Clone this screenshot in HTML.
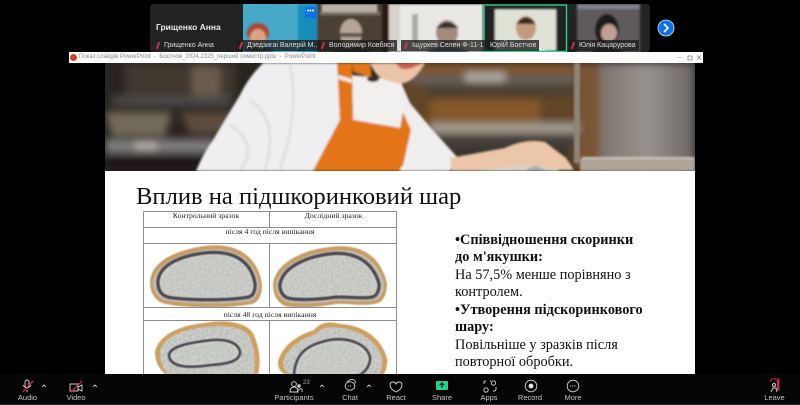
<!DOCTYPE html>
<html><head><meta charset="utf-8">
<style>
html,body{margin:0;padding:0;background:#000;}
body{width:800px;height:405px;position:relative;overflow:hidden;font-family:"Liberation Sans",sans-serif;}
.a{position:absolute;}
.name{position:absolute;height:11px;line-height:11px;font-size:7px;color:#ddd;background:rgba(30,30,30,.8);padding:0 3px 0 11px;white-space:nowrap;top:39.500px;filter:blur(.35px);}
.name:before{content:"";position:absolute;left:4px;top:2px;width:2px;height:7px;background:#d0304a;transform:rotate(20deg);}
.lab{position:absolute;top:393px;font-size:7.5px;line-height:10px;color:#c4c4c4;transform:translateX(-50%);white-space:nowrap;filter:blur(.2px);}
.t{position:absolute;font-family:"Liberation Serif",serif;color:#111;white-space:nowrap;filter:blur(.25px);}
.b{position:absolute;left:455px;font-family:"Liberation Serif",serif;font-size:14.300px;line-height:17px;color:#111;white-space:nowrap;filter:blur(.2px);}
</style></head><body>

<!-- gallery -->
<div class="a" style="left:150px;top:4px;width:500px;height:48px;background:#232326;border-radius:4px;"></div>
<svg class="a" style="left:150px;top:4px" width="500" height="48" viewBox="150 4 500 48">
<defs><filter id="f1"><feGaussianBlur stdDeviation="1"/></filter></defs>
<rect x="243" y="4" width="74" height="48" fill="#46a9c8"/>
<g filter="url(#f1)">
<rect x="298" y="4" width="19" height="48" fill="#188cb8"/>
<ellipse cx="258" cy="33" rx="11" ry="10" fill="#a94a35"/>
<ellipse cx="258" cy="38" rx="8" ry="9" fill="#d9a486"/>
<path d="M243 52 Q258 40 274 52Z" fill="#333"/>
<rect x="317" y="4" width="82" height="48" fill="#4b4136"/>
<rect x="322" y="4" width="55" height="8" fill="#b8b2a6"/>
<rect x="320" y="12" width="60" height="3" fill="#7d7568"/>
<rect x="382" y="4" width="7" height="48" fill="#2a1a10"/>
<rect x="389" y="4" width="11" height="48" fill="#d8d4cc"/>
<ellipse cx="351" cy="33" rx="11" ry="14" fill="#b7a49a"/>
<rect x="340" y="33" width="22" height="4" fill="#555"/>
<path d="M330 52 Q351 40 373 52Z" fill="#222"/>
<rect x="400" y="4" width="83" height="48" fill="#e9e8e4"/>
<rect x="412" y="14" width="6" height="30" fill="#aaa"/>
<ellipse cx="447" cy="33" rx="11" ry="13" fill="#a38a7a"/>
<path d="M436 28 Q447 16 459 28Z" fill="#333"/>
<path d="M425 52 Q447 40 470 52Z" fill="#5a6a78"/>
<rect x="487" y="9" width="76" height="42" fill="#dfe3d6"/>
<rect x="486" y="9" width="9" height="42" fill="#222"/>
<rect x="556" y="9" width="9" height="42" fill="#222"/>
<ellipse cx="526" cy="28" rx="10" ry="12" fill="#c49a7f"/>
<path d="M516 24 Q526 10 536 24Z" fill="#3a2a1a"/>
<path d="M506 52 Q526 36 546 52Z" fill="#e4e4e2"/>
<rect x="577" y="4" width="63" height="48" fill="#5e5a5c"/>
<rect x="577" y="4" width="63" height="5" fill="#80838c"/>
<ellipse cx="607" cy="30" rx="12" ry="16" fill="#1f1a1a"/>
<ellipse cx="609" cy="33" rx="8" ry="9" fill="#c0a090"/>
<path d="M590 52 Q604 40 625 52Z" fill="#1c1c1c"/>
</g>
<rect x="484" y="5" width="82.500" height="46.500" fill="none" stroke="#23d18b" stroke-width="1.400"/>
<rect x="305" y="7" width="11" height="11" rx="1" fill="#0e71eb"/>
<text x="310.500" y="13" fill="#fff" font-size="7" text-anchor="middle" font-family="Liberation Sans">•••</text>
</svg>
<div class="a" style="left:156px;top:22px;font-size:8.500px;font-weight:bold;color:#e8e8e8;white-space:nowrap;filter:blur(.2px)">Грищенко Анна</div>
<div class="name" style="left:153px;background:none;">Грищенко Анна</div>
<div class="name" style="left:236px;">Дзедзигаі Валерій М..</div>
<div class="name" style="left:318px;">Володимир Ковбяся</div>
<div class="name" style="left:401px;">Іщуркев Селен Ф-11-1</div>
<div class="a" style="left:487px;top:39.500px;font-size:7px;line-height:11px;color:#ddd;background:rgba(30,30,30,.8);padding:0 3px;white-space:nowrap;filter:blur(.35px)">ЮрІЙ Боєтчов</div>
<div class="name" style="left:568px;">Юлія Кацарурова</div>
<svg class="a" style="left:657px;top:19px" width="18" height="18"><circle cx="9" cy="9" r="8" fill="#0e71eb" stroke="#dfeaf8" stroke-width=".8"/><path d="M7 5l4 4-4 4" fill="none" stroke="#fff" stroke-width="1.600"/></svg>

<!-- window title -->
<div class="a" style="left:69px;top:52px;width:634px;height:11px;background:#fcfcfc;"></div>
<div class="a" style="left:70px;top:54px;width:7px;height:7px;border-radius:50%;background:#c9442a;"></div>
<div class="a" style="left:79px;top:52px;height:11px;line-height:11px;font-size:6px;color:#8b8b8b;white-space:nowrap;filter:blur(.25px)">Показ слайдів PowerPoint &nbsp;-&nbsp; Боєтчов_2024.2325_перший семестр.pptx &nbsp;-&nbsp; PowerPoint</div>
<svg class="a" style="left:670px;top:52px" width="33" height="11"><path d="M7 5.500h5" stroke="#bbb" stroke-width=".7"/><rect x="18" y="4" width="4" height="4" fill="none" stroke="#777" stroke-width=".7"/><path d="M27 3.500l4 4m0-4l-4 4" stroke="#777" stroke-width=".7"/></svg>

<!-- photo -->
<svg class="a" style="left:105px;top:63px" width="590" height="108" viewBox="105 63 590 108">
<defs><filter id="b3"><feGaussianBlur stdDeviation="4"/></filter><filter id="b1"><feGaussianBlur stdDeviation="1"/></filter>
<linearGradient id="st" x1="0" x2="1" y1="0" y2="0"><stop offset="0" stop-color="#7d756c"/><stop offset=".5" stop-color="#98938e"/><stop offset="1" stop-color="#6a6460"/></linearGradient></defs>
<rect x="105" y="63" width="590" height="108" fill="#2a2420"/>
<g filter="url(#b3)">
<rect x="125" y="63" width="110" height="34" fill="#41382f"/>
<rect x="192" y="66" width="28" height="40" fill="#6a5c4e"/>
<rect x="112" y="96" width="120" height="10" fill="#4a4a4a"/>
<path d="M105 112 H172 L165 136 H112Z" fill="#756a5a"/>
<path d="M180 112 H240 L228 134 H190Z" fill="#5a4c3c"/>
<rect x="105" y="139" width="110" height="14" fill="#7d7d7b"/>
<rect x="135" y="142" width="22" height="8" fill="#b5b2ac"/>
<rect x="105" y="156" width="100" height="15" fill="#1a1816"/>
<rect x="400" y="63" width="180" height="108" fill="#604526"/>
<rect x="415" y="63" width="160" height="11" fill="#80592f"/>
<rect x="410" y="75" width="165" height="9" fill="#66615a"/>
<rect x="465" y="73" width="40" height="8" fill="#b5b2ac"/>
<rect x="428" y="85" width="148" height="11" fill="#494032"/>
<rect x="430" y="100" width="110" height="22" fill="#86592c"/>
<rect x="430" y="123" width="150" height="10" fill="#a49c90"/>
<rect x="430" y="134" width="150" height="12" fill="#45403b"/>
<rect x="440" y="146" width="130" height="25" fill="#38342f"/>
<rect x="578" y="63" width="22" height="108" fill="#7a5534"/>
<rect x="600" y="63" width="95" height="108" fill="url(#st)"/>
</g>
<rect x="574" y="63" width="6" height="100" fill="#8f8676" filter="url(#b1)"/>
<g filter="url(#b1)">
<rect x="580" y="158" width="115" height="13" fill="#aca498"/>
<rect x="582" y="157" width="112" height="2" fill="#cfc9c1"/>
<path d="M263 63 H338 L340 120 L313 171 H196 Q204 152 213 140 Q226 118 240 95 Q248 78 263 63Z" fill="#efeff1"/>
<path d="M250 100 Q280 120 265 170 M290 66 Q300 110 280 170 M230 125 Q260 145 240 170" stroke="#d6d6dc" stroke-width="3" fill="none" opacity=".6"/>
<path d="M352 75 L400 80 L410 103 L430 127 L457 157 L450 171 H400 L400 128 L353 120Z" fill="#f2f0ee"/>
<path d="M337 63 H352 L353 120 L400 128 L410 130 L400 171 H313 L340 120Z" fill="#e37518"/>
<path d="M352 63 H370 L372 78 L353 72Z" fill="#e37518"/>
<path d="M338 75 L352 79 L352 83 L338 79Z" fill="#f2ede6"/>
<path d="M370 63 H425 Q415 82 400 84 L385 80 Q375 76 370 63Z" fill="#e9c4a6"/>
<ellipse cx="373" cy="79" rx="6" ry="3" fill="#3b2a20"/>
<path d="M396 63 H424 L412 68 Q400 72 396 63Z" fill="#c9604c"/>
<path d="M400 82 L408 104 L428 128 L458 158 L450 171 H410 L408 130 Z" fill="#f0eeec"/>
<path d="M403 112 L411 130 L403 166 L400 168 V128Z" fill="#e37518"/>
<path d="M450 158 L505 148 Q525 138 545 142 L566 158 L574 170 L452 171Z" fill="#ecc6a8"/>
<path d="M480 171 Q530 160 560 171Z" fill="#d9d4c8"/>
<path d="M525 171 L535 165 L548 171Z" fill="#a9b2ba"/>
</g>
</svg>

<!-- slide -->
<div class="a" style="left:105px;top:171px;width:590px;height:203px;background:#fff;"></div>
<div class="t" style="left:136px;top:182px;font-size:24.600px;line-height:30px;">Вплив на підшкоринковий шар</div>

<svg class="a" style="left:105px;top:171px" width="300" height="203" viewBox="105 171 300 203">
<defs><filter id="s"><feGaussianBlur stdDeviation=".4"/></filter>
<filter id="r"><feTurbulence type="fractalNoise" baseFrequency=".6" numOctaves="2" seed="3" result="n"/><feColorMatrix in="n" values="0 0 0 0 .4  0 0 0 0 .4  0 0 0 0 .38  3 0 0 0 -1.250" result="c"/><feComposite in="c" in2="SourceGraphic" operator="in" result="g"/><feMerge><feMergeNode in="SourceGraphic"/><feMergeNode in="g"/></feMerge><feGaussianBlur stdDeviation=".4"/></filter>
<clipPath id="cp"><rect x="105" y="171" width="300" height="203"/></clipPath></defs>
<g clip-path="url(#cp)">
<g filter="url(#s)">
<path d="M150 283 C150 262 175 250 205 246 C235 242 258 255 262 285 C262 296 258 302 252 304 C225 309 180 308 162 303 C154 299 150 292 150 283Z" fill="#c89c62"/>
<path d="M273 285 C274 265 300 250 330 247 C360 243 380 255 387 283 C387 296 382 302 378 303 C365 307 350 303 335 304 C315 308 295 308 285 306 C277 302 273 295 273 285Z" fill="#c89c62"/>
<path d="M155 352 C158 335 180 325 205 323 C225 319 248 322 254 335 C260 350 261 362 258 374 H165 C158 368 155 360 155 352Z" fill="#cf9f5e"/>
<path d="M278 362 C282 345 298 335 314 330 C320 322 330 321 340 324 C365 325 382 340 387 358 C388 364 386 370 384 374 H285 C280 372 278 368 278 362Z" fill="#cf9f5e"/>
</g>
<g filter="url(#r)">
<path d="M153 283 C154 265 178 254 205 250 C233 246 255 258 259 285 C259 294 255 299 250 301 C225 305 182 304 164 300 C157 297 153 290 153 283Z" fill="#c9c5b8"/>
<path d="M276 285 C278 268 302 254 330 251 C358 247 377 259 384 283 C384 294 380 299 375 300 C362 303 348 300 335 301 C315 304 297 304 287 302 C280 299 276 293 276 285Z" fill="#c9c5b8"/>
<path d="M160 352 C162 338 182 329 205 327 C225 324 245 327 250 338 C255 350 256 362 254 374 H168 C162 368 160 360 160 352Z" fill="#d0d3ce"/>
<path d="M283 362 C287 348 300 339 316 334 C322 327 332 326 340 328 C362 330 378 343 382 358 C383 364 381 370 380 374 H290 C285 371 283 367 283 362Z" fill="#d0d3ce"/>
</g>
<g filter="url(#s)" stroke="#4f4a52" stroke-width="3.500" fill="#cfd2cd" stroke-linejoin="round">
<path d="M158 282 C159 265 180 256 205 253 C232 250 251 260 255 284 C255 292 253 296 248 297 C225 301 185 300 168 297 C161 295 158 290 158 282Z"/>
<path d="M280 285 C282 268 305 257 330 254 C355 251 373 262 379 284 C379 292 376 296 372 297 C360 299 345 296 335 297 C315 300 297 300 288 298 C283 296 280 292 280 285Z"/>
<path d="M169 355 C171 346 190 343 205 341 C225 338 238 342 240 352 C240 362 225 364 210 365 C190 368 170 368 169 355Z" stroke-width="2.800"/>
<path d="M294 376 C295 355 305 345 330 340 C350 337 368 345 370 358 C370 366 365 372 358 376Z" stroke-width="2.800"/>
</g>
<g filter="url(#r)" opacity=".75">
<path d="M161 282 C162 267 182 259 205 256 C230 253 249 263 252 284 C252 291 250 294 246 295 C225 298 186 297 170 295 C164 293 161 289 161 282Z" fill="#cfd2cd"/>
<path d="M283 285 C285 270 306 260 330 257 C353 254 370 264 376 284 C376 291 373 294 370 295 C358 296 345 294 335 295 C315 297 298 297 290 296 C285 294 283 291 283 285Z" fill="#cfd2cd"/>
<path d="M172 355 C174 348 190 346 205 344 C225 341 236 345 237 352 C237 360 224 361 210 362 C192 365 173 364 172 355Z" fill="#cfd2cd"/>
<path d="M297 374 C298 357 308 348 330 343 C348 340 365 348 367 358 C367 365 362 371 356 374Z" fill="#cfd2cd"/>
</g>
</g>
<g stroke="#8d8d90" stroke-width="1" fill="none">
<path d="M143.500 211.500H396.500 M143.500 211.500V374 M396.500 211.500V374 M269.500 211.500V227 M269.500 243.500V307.500 M269.500 320.500V374"/>
<path d="M143 227.500H397 M143 243.500H397 M143 307.500H397 M143 320.500H397"/>
</g>
</svg>
<div class="t" style="left:143px;width:126px;text-align:center;top:211px;font-size:7.700px;line-height:10px;color:#222;">Контрольний зразок</div>
<div class="t" style="left:270px;width:127px;text-align:center;top:211px;font-size:7.700px;line-height:10px;color:#222;">Дослідний зразок</div>
<div class="t" style="left:143px;width:254px;text-align:center;top:226px;font-size:7.700px;line-height:11px;color:#222;">після 4 год після випікання</div>
<div class="t" style="left:143px;width:254px;text-align:center;top:309px;font-size:7.700px;line-height:11px;color:#222;">після 48 год після випікання</div>

<div class="b" style="top:232px;font-weight:bold;">•Співвідношення скоринки</div>
<div class="b" style="top:249px;font-weight:bold;">до м'якушки:</div>
<div class="b" style="top:266.500px;">На 57,5% менше порівняно з</div>
<div class="b" style="top:284px;">контролем.</div>
<div class="b" style="top:302px;font-weight:bold;">•Утворення підскоринкового</div>
<div class="b" style="top:319px;font-weight:bold;">шару:</div>
<div class="b" style="top:336.500px;">Повільніше у зразків після</div>
<div class="b" style="top:354px;">повторної обробки.</div>

<!-- toolbar -->
<div class="a" style="left:0;top:374px;width:800px;height:31px;background:#050505;"></div>
<div class="a" style="left:0;top:404px;width:800px;height:1px;background:#1c2a33;"></div>
<svg class="a" style="left:0;top:374px" width="800" height="31" viewBox="0 374 800 31" fill="none" stroke="#d6d6d6" stroke-width=".9">
<rect x="25" y="380" width="4" height="8" rx="2"/><path d="M23 385q4 6 8 0M27 390v2"/>
<path d="M23 392L33 381" stroke="#d8324e" stroke-width="1.200"/>
<path d="M42 387l2-2 2 2M93 387l2-2 2 2M320 387l2-2 2 2M367 387l2-2 2 2" stroke-width=".8"/>
<rect x="70" y="384" width="8" height="7"/><path d="M78 387l4-2v6l-4-2"/>
<path d="M71 392L82 381" stroke="#d8324e" stroke-width="1.200"/>
<circle cx="294" cy="384" r="2.400"/><path d="M290 392q0-5 4-5t4 5z"/><circle cx="299" cy="386" r="1.700" fill="#d6d6d6" stroke="none"/><path d="M297 392q2-4 5-3v3"/>
<ellipse cx="350" cy="386" rx="4.800" ry="4.200"/><path d="M347 382q3-3 6-2.500 3 1 2 4"/><path d="M348 386h4" stroke-dasharray="1 1"/>
<path d="M396 392q-6-3-6-7 0-3 3-3 2 0 3 2 1-2 3-2 3 0 3 3 0 4-6 7z"/>
<rect x="436" y="381" width="12" height="9" rx="1" fill="#23d18b" stroke="none"/>
<path d="M442 388v-5m-2.200 2.200l2.200-2.200 2.200 2.200" stroke="#0b2a1e" stroke-width="1.200"/>
<path d="M484 384v-2q0-1 2-1M490 381h1"/><circle cx="493.500" cy="383" r="2.200"/><circle cx="486" cy="390" r="2.200"/><path d="M496 387v2q0 2-2 2h-1"/>
<circle cx="531" cy="386" r="5.800"/><circle cx="531" cy="386" r="2.400" fill="#e6e6e6" stroke="none"/>
<circle cx="573" cy="386" r="5.800"/><path d="M570 386h6" stroke-dasharray="1.100 1.100"/>
<path d="M771 382v-3h8v11h-2" stroke="#c0304a"/><rect x="777" y="380" width="2" height="10" stroke="#c0304a" fill="#c0304a" stroke-width=".3"/>
<circle cx="774" cy="385" r="1.500"/><path d="M771 392l2-4h3l1 4"/>
</svg>
<div class="a" style="left:303px;top:380px;font-size:6px;color:#aaa;">23</div>
<div class="lab" style="left:27.500px">Audio</div>
<div class="lab" style="left:76px">Video</div>
<div class="lab" style="left:294px">Participants</div>
<div class="lab" style="left:350px">Chat</div>
<div class="lab" style="left:396px">React</div>
<div class="lab" style="left:442px">Share</div>
<div class="lab" style="left:489px">Apps</div>
<div class="lab" style="left:530px">Record</div>
<div class="lab" style="left:573px">More</div>
<div class="lab" style="left:774.500px">Leave</div>
</body></html>
